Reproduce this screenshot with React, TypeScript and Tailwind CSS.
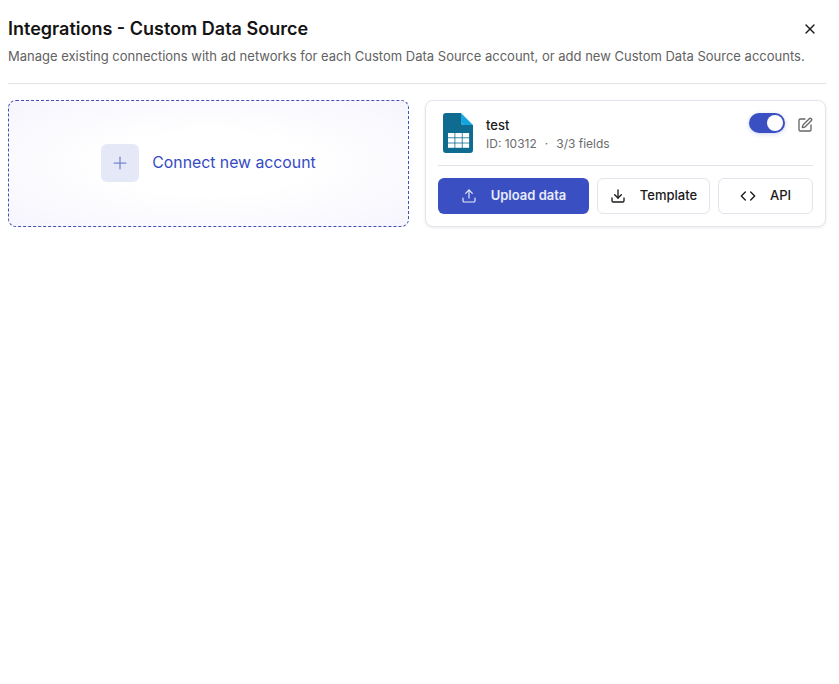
import { Code, Download, Plus, SquarePen, Upload, X } from "lucide-react";

function FileIcon() {
  return (
    <svg width="30" height="40" viewBox="0 0 30 40" className="shrink-0">
      <path d="M3 0h15v9a3 3 0 0 0 3 3h9v25a3 3 0 0 1-3 3H3a3 3 0 0 1-3-3V3a3 3 0 0 1 3-3z" fill="#0f6b8f" />
      <path d="M18 0l12 12h-9a3 3 0 0 1-3-3z" fill="#14a5de" />
      <g fill="#ffffff">
        <rect x="5" y="20" width="6.5" height="4.4" />
        <rect x="12.3" y="20" width="6.5" height="4.4" />
        <rect x="19.6" y="20" width="6.5" height="4.4" />
        <rect x="5" y="25.2" width="6.5" height="4.4" />
        <rect x="12.3" y="25.2" width="6.5" height="4.4" />
        <rect x="19.6" y="25.2" width="6.5" height="4.4" />
        <rect x="5" y="30.4" width="6.5" height="4.4" />
        <rect x="12.3" y="30.4" width="6.5" height="4.4" />
        <rect x="19.6" y="30.4" width="6.5" height="4.4" />
      </g>
    </svg>
  );
}

export default function App() {
  return (
    <div className="min-h-[684px] bg-white px-2 pt-[18px] font-['Inter',sans-serif]">
      <div className="flex h-[22px] items-center justify-between">
        <h1 className="text-[18px] leading-[22px] font-semibold text-[#141414]">
          Integrations - Custom Data Source
        </h1>
        <button className="mr-[13px] text-[#1a1a1a]">
          <X size={16} strokeWidth={2} />
        </button>
      </div>
      <p className="mt-[7px] text-[13px] leading-[18px] whitespace-nowrap text-[#626262]">
        Manage existing connections with ad networks for each Custom Data Source account, or add new Custom Data Source accounts.
      </p>
      <div className="mt-[18px] mr-[5px] h-px bg-[#e2e2e2]" />

      <div className="mt-4 mr-[5px] flex gap-4">
        <button className="flex h-[127px] w-[401px] items-center justify-center gap-[13px] rounded-lg border border-dashed border-[#4450b8] bg-[radial-gradient(ellipse_at_center,#ffffff_35%,#f6f5fd_100%)] pb-[2px]">
          <span className="flex h-[38px] w-[38px] items-center justify-center rounded-md bg-[#e5e8f7] text-[#7584cf]">
            <Plus size={20} strokeWidth={1.5} />
          </span>
          <span className="text-[15.8px] font-normal text-[#334bc4]">Connect new account</span>
        </button>

        <div className="h-[127px] flex-1 rounded-lg border border-[#e4e5ec] bg-white px-3 pt-3 shadow-[0_1px_3px_rgba(0,0,0,0.08)]">
          <div className="flex h-[53px] border-b border-[#e2e3ea] pl-[5px]">
            <FileIcon />
            <div className="ml-[13px] pt-[3px]">
              <div className="text-[13px] leading-[18px] font-medium text-[#1a1a1a]">test</div>
              <div className="mt-px flex gap-[8px] text-[12px] leading-[18px] text-[#6c6c6c]">
                <span>ID: 10312</span>
                <span>·</span>
                <span>3/3 fields</span>
              </div>
            </div>
            <div className="ml-auto flex h-5 items-center gap-[12px]">
              <div className="flex h-5 w-9 items-center justify-end rounded-full bg-[#3a50c2] pr-[2px] shadow-[0_1px_4px_rgba(58,80,194,0.25)]">
                <div className="h-4 w-4 rounded-full bg-white" />
              </div>
              <SquarePen size={16} strokeWidth={2} className="mt-1 text-[#666666]" />
            </div>
          </div>
          <div className="mt-3 flex gap-2">
            <button className="flex h-9 w-[151px] items-center justify-center gap-[14px] rounded-md bg-[#3a50c2] text-[13px] font-semibold text-[#e8ebfa]">
              <Upload size={16} strokeWidth={1.75} />
              Upload data
            </button>
            <button className="flex h-9 w-[113px] items-center justify-center gap-[14px] rounded-md border border-[#e4e5ec] text-[13px] font-medium text-[#1a1a1a]">
              <Download size={16} strokeWidth={2} />
              Template
            </button>
            <button className="flex h-9 w-[95px] items-center justify-center gap-[14px] rounded-md border border-[#e4e5ec] text-[13px] font-medium text-[#1a1a1a]">
              <Code size={16} strokeWidth={2} />
              API
            </button>
          </div>
        </div>
      </div>
    </div>
  );
}
